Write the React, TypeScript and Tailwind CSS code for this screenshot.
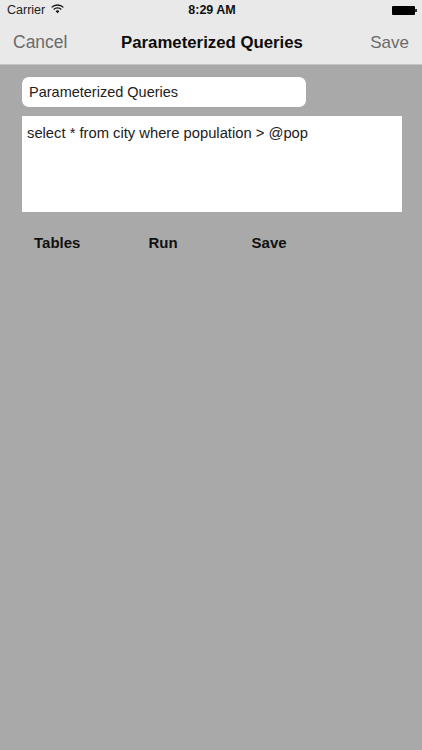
const sans = 'font-["Liberation_Sans",Arial,sans-serif]';

function WifiIcon() {
  return (
    <svg width="13" height="10" viewBox="0 0 13 10" className="ml-[6px] -translate-y-px">
      <path d="M0.6 3.4a8.4 8.4 0 0 1 11.8 0" fill="none" stroke="#111" strokeWidth="1.3" />
      <path d="M2.7 5.5a5.4 5.4 0 0 1 7.6 0" fill="none" stroke="#111" strokeWidth="1.3" />
      <path d="M4.6 7.2a2.7 2.7 0 0 1 3.8 0L6.5 9.3z" fill="#111" />
    </svg>
  );
}

function BatteryIcon() {
  return (
    <div className="flex items-center">
      <div className="h-[9px] w-[23px] rounded-[1px] bg-black" />
      <div className="h-[3px] w-[2px] bg-[#333]" />
    </div>
  );
}

function ActionButton({ label, className }: { label: string; className: string }) {
  return <button className={`text-[15px] leading-[18px] font-bold text-[#111] ${className}`}>{label}</button>;
}

export default function App() {
  return (
    <div className={`flex h-[750px] w-[422px] flex-col overflow-hidden bg-[#a9a9a9] ${sans}`}>
      <header className="h-[65px] shrink-0 border-b border-[#c4c4c4] bg-[#e9e9e9]">
        <div className="relative flex h-[20px] items-center pr-[5px] pl-[7px]">
          <span className="text-[12.5px] text-[#222]">Carrier</span>
          <WifiIcon />
          <span className="absolute inset-x-0 pl-[2px] text-center text-[12.5px] font-bold text-[#111]">8:29 AM</span>
          <div className="ml-auto">
            <BatteryIcon />
          </div>
        </div>
        <div className="relative flex h-[44px] items-center justify-between px-[13px] pt-[1px]">
          <span className="text-[17.5px] text-[#6b6b6b]">Cancel</span>
          <span className="absolute inset-x-0 pl-[2px] text-center text-[16.8px] font-bold text-[#0c0c0c]">
            Parameterized Queries
          </span>
          <span className="text-[17px] text-[#6b6b6b]">Save</span>
        </div>
      </header>
      <main className="flex flex-col pt-[12px] pl-[22px]">
        <div className="flex h-[30px] w-[284px] items-center rounded-[7px] bg-white pt-[1px] pl-[7px] text-[14.5px] text-[#222]">
          Parameterized Queries
        </div>
        <div className="mt-[9px] h-[96px] w-[380px] bg-white pt-[8px] pl-[5px] text-[14.75px] leading-[18px] text-[#222]">
          {'select * from city where population > @pop'}
        </div>
        <div className="mt-[22px] flex">
          <ActionButton label="Tables" className="ml-[12px]" />
          <ActionButton label="Run" className="ml-[68px]" />
          <ActionButton label="Save" className="ml-[74px]" />
        </div>
      </main>
    </div>
  );
}
